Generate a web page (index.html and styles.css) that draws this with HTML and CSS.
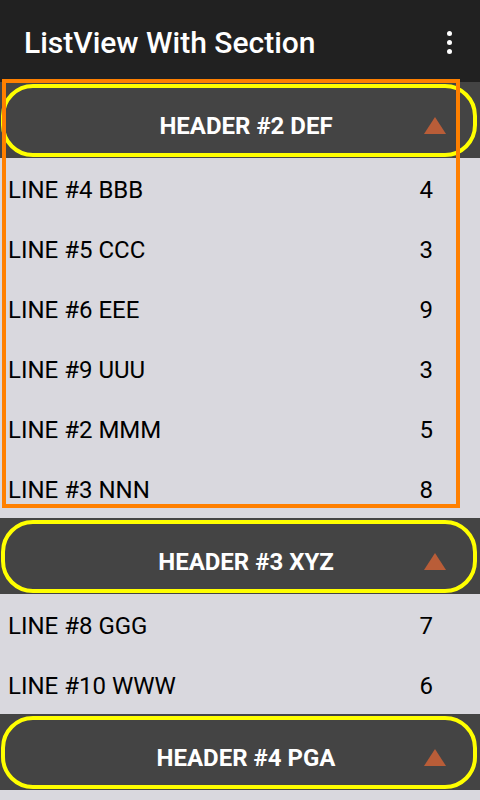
FILE: index.html
```html
<!DOCTYPE html>
<html>
<head>
<meta charset="utf-8">
<link rel="stylesheet" href="styles.css">
</head>
<body>
<div class="app">
  <header class="appbar">
    <h1 class="title">ListView With Section</h1>
    <div class="menu"><span></span><span></span><span></span></div>
  </header>
  <main class="list">
    <section class="group">
      <div class="section-head"><div class="pill"><span class="head-text">HEADER #2 DEF</span><span class="tri"></span></div></div>
      <div class="row"><span>LINE #4 BBB</span><span>4</span></div>
      <div class="row"><span>LINE #5 CCC</span><span>3</span></div>
      <div class="row"><span>LINE #6 EEE</span><span>9</span></div>
      <div class="row"><span>LINE #9 UUU</span><span>3</span></div>
      <div class="row"><span>LINE #2 MMM</span><span>5</span></div>
      <div class="row"><span>LINE #3 NNN</span><span>8</span></div>
    </section>
    <section class="group">
      <div class="section-head"><div class="pill"><span class="head-text">HEADER #3 XYZ</span><span class="tri"></span></div></div>
      <div class="row"><span>LINE #8 GGG</span><span>7</span></div>
      <div class="row"><span>LINE #10 WWW</span><span>6</span></div>
    </section>
    <section class="group">
      <div class="section-head"><div class="pill"><span class="head-text">HEADER #4 PGA</span><span class="tri"></span></div></div>
    </section>
  </main>
  <div class="focus-box"></div>
</div>
</body>
</html>
```

FILE: styles.css
```css
html, body {
  margin: 0;
  padding: 0;
}
body {
  width: 480px;
  height: 800px;
  overflow: hidden;
  background: #d9d8de;
  font-family: Roboto, "Noto Sans", sans-serif;
}
.app {
  position: relative;
  height: 800px;
}
.appbar {
  height: 82px;
  background: #212121;
  display: flex;
  align-items: center;
  padding: 0 28px 0 24px;
  box-sizing: border-box;
  justify-content: space-between;
}
.title {
  margin: 0;
  color: #fff;
  font-size: 30px;
  font-weight: 500;
  padding-top: 2px;
}
.menu {
  display: flex;
  flex-direction: column;
  gap: 4px;
  padding-top: 2px;
}
.menu span {
  width: 5px;
  height: 5px;
  border-radius: 50%;
  background: #fff;
}
.list {
  background: #d9d8de;
}
.section-head {
  height: 76px;
  background: #444444;
  padding: 2px 3px 1px 1px;
  box-sizing: border-box;
}
.pill {
  height: 100%;
  border: 4px solid #ffff00;
  border-radius: 32px;
  box-sizing: border-box;
  display: flex;
  align-items: center;
  padding: 10px 27px 0 63px;
}
.head-text {
  flex: 1;
  text-align: center;
  color: #fff;
  font-weight: 700;
  font-size: 24px;
}
.tri {
  width: 0;
  height: 0;
  border-left: 11.5px solid transparent;
  border-right: 11.5px solid transparent;
  border-bottom: 17px solid #b95d38;
}
.row {
  height: 60px;
  display: flex;
  align-items: center;
  justify-content: space-between;
  padding: 3px 47px 0 8px;
  box-sizing: border-box;
  font-size: 24px;
  color: #000;
}
.focus-box {
  position: absolute;
  left: 2px;
  top: 79px;
  width: 458px;
  height: 429px;
  border: 4px solid #ff8000;
  box-sizing: border-box;
  pointer-events: none;
}
```
